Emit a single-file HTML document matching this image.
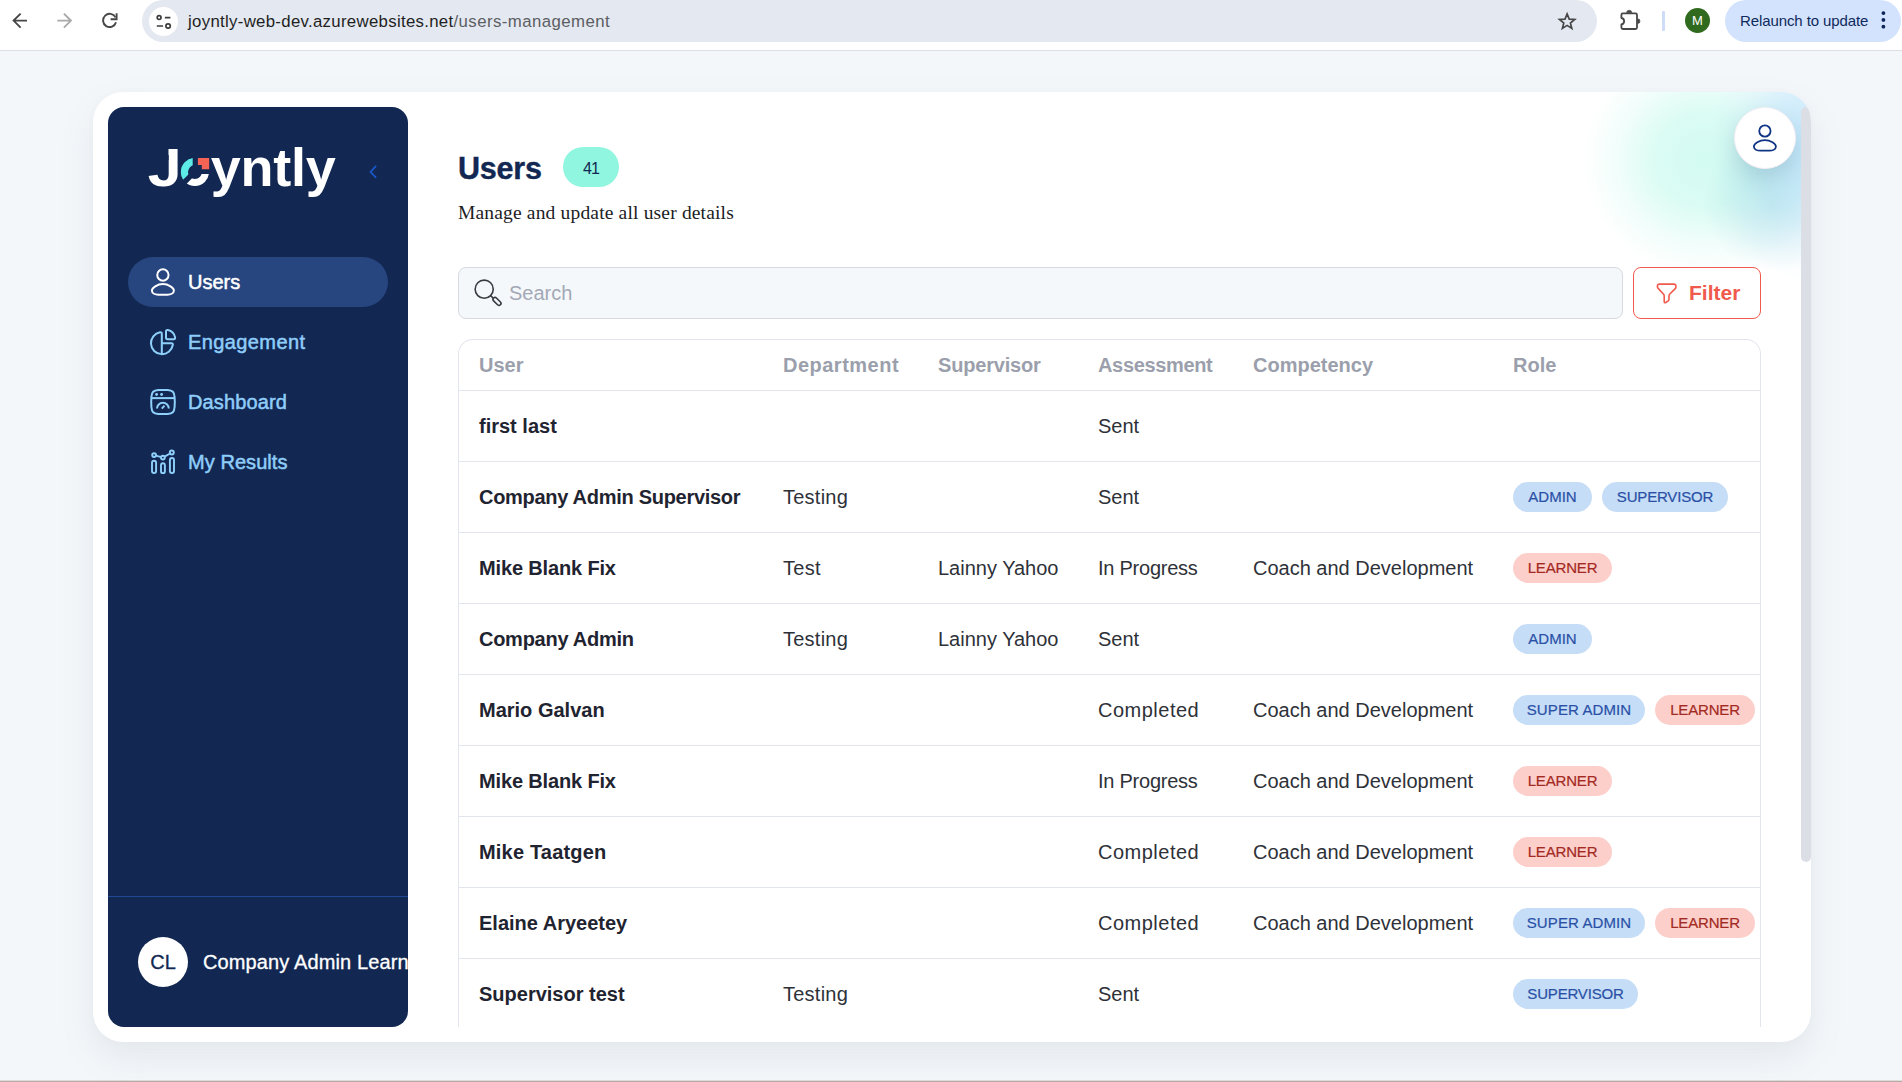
<!DOCTYPE html>
<html lang="en">
<head>
<meta charset="utf-8">
<title>Joyntly - Users</title>
<style>
*{box-sizing:border-box;margin:0;padding:0}
html,body{width:1902px;height:1082px;overflow:hidden}
body{position:relative;background:#f4f7fa;font-family:"Liberation Sans",sans-serif;color:#1f2430}
.abs{position:absolute}
/* ---------- browser chrome ---------- */
#chrome{position:absolute;left:0;top:0;width:1902px;height:51px;background:#fff;border-bottom:1px solid #dcdfe4}
#urlbar{position:absolute;left:142px;top:0;width:1455px;height:42px;border-radius:21px;background:#e4e8f0}
#tune{position:absolute;left:6.5px;top:6.5px;width:29px;height:29px;border-radius:50%;background:#fff}
#urltext{position:absolute;left:46px;top:1px;height:41px;line-height:41px;font-size:16.8px;color:#1f1f1f;white-space:nowrap;letter-spacing:0.31px}
#urltext span{color:#5b5e63;letter-spacing:0.43px}
#relaunch{position:absolute;left:1725px;top:0;width:176px;height:42px;border-radius:21px;background:#d3e3fd}
#relaunch .t{position:absolute;left:15px;top:0;line-height:42px;font-size:15px;letter-spacing:-.1px;color:#0f2a5c;white-space:nowrap}
#mavatar{position:absolute;left:1685px;top:8px;width:25px;height:25px;border-radius:50%;background:#2f6a1e;color:#fff;font-size:13px;line-height:25px;text-align:center}
#sep{position:absolute;left:1662px;top:11px;width:2.5px;height:19.5px;background:#cfdcf7;border-radius:1px}
/* ---------- app card ---------- */
#bottomline{position:absolute;left:0;top:1080px;width:1902px;height:2px;background:#b5aca5;border-top:1px solid #dedbd9}
#card{position:absolute;left:93px;top:92px;width:1718px;height:950px;border-radius:30px;background:#fff;box-shadow:0 16px 34px rgba(105,120,135,.115),0 0 6px rgba(105,120,135,.03);overflow:hidden}
#glow{position:absolute;left:1300px;top:0;width:417px;height:330px;background:radial-gradient(ellipse 95px 140px at 414px 50px,rgba(172,220,250,.7) 0%,rgba(172,220,250,.45) 35%,rgba(172,220,250,.15) 70%,rgba(168,218,250,0) 100%),radial-gradient(ellipse 70px 70px at 380px 110px,rgba(120,200,215,.35) 0%,rgba(120,200,215,.18) 50%,rgba(120,200,215,0) 100%),radial-gradient(ellipse 122px 116px at 312px 68px,rgba(150,245,222,.42) 0%,rgba(150,245,222,.35) 40%,rgba(150,245,222,.13) 72%,rgba(150,245,222,0) 100%)}
#sidebar{position:absolute;left:15px;top:15px;width:300px;height:920px;border-radius:16px;background:#122852;overflow:hidden;color:#fff}
.lo{color:transparent}
.lj{display:inline-block;transform:scaleX(1.13);transform-origin:8% 50%;clip-path:polygon(0 28px,18.4px 28px,18.4px 0,100% 0,100% 100%,0 100%)}
#logo{position:absolute;left:40px;top:25px;height:70px;line-height:70px;font-size:54px;font-weight:bold;letter-spacing:-0.2px;white-space:nowrap;color:#fff}
.nav{position:absolute;left:20px;width:260px;height:50px;border-radius:25px;color:#8fcdfa;font-size:20px;line-height:50px;-webkit-text-stroke:0.5px currentColor}
.nav.act{background:#27457f;color:#fff}
.nav .lbl{position:absolute;left:60px;top:0;white-space:nowrap}
#sdiv{position:absolute;left:0;top:789px;width:300px;height:1px;background:#1f4992}
#cl{position:absolute;left:30px;top:830px;width:50px;height:50px;border-radius:50%;background:#fff;color:#122852;font-size:20px;line-height:50px;text-align:center;-webkit-text-stroke:.3px #122852}
#cname{position:absolute;left:95px;top:830px;line-height:50px;font-size:20px;letter-spacing:.12px;-webkit-text-stroke:0.3px #fff;white-space:nowrap;color:#fff}
/* ---------- main ---------- */
#title{position:absolute;left:365px;top:53px;font-size:30.5px;font-weight:bold;letter-spacing:-.2px;color:#122852;line-height:46px;-webkit-text-stroke:.4px #122852}
#count{position:absolute;left:470px;top:55px;width:56px;height:40px;border-radius:20px;background:#90f6e0;color:#122852;font-size:16px;line-height:43px;text-align:center;letter-spacing:-1px}
#sub{position:absolute;left:365px;top:106px;font-family:"Liberation Serif",serif;font-size:19.5px;letter-spacing:.17px;line-height:30px;color:#1d1d1f;white-space:nowrap}
#search{position:absolute;left:365px;top:175px;width:1165px;height:52px;border-radius:8px;background:#f5f8fb;border:1px solid #d6d9e1}
#search .ph{position:absolute;left:50px;top:0;line-height:50px;font-size:20px;color:#a3a8b6}
#filter{position:absolute;left:1540px;top:175px;width:128px;height:52px;border-radius:8px;border:1px solid #f05a4c;color:#f05a4c;font-weight:bold;font-size:21px;background:rgba(255,255,255,.6)}
#filter .t{position:absolute;left:55px;top:0;line-height:50px}
#profile{position:absolute;left:1641px;top:15px;width:62px;height:62px;border-radius:50%;background:#fff;border:1px solid #f3eef3;box-shadow:0 10px 22px rgba(60,110,130,.22)}
#sbar{position:absolute;left:1708.3px;top:15px;width:9.7px;height:755px;border-radius:5px;background:#dcdee6}
/* table */
#tbl{position:absolute;left:365px;top:247px;width:1303px;height:688px;border:1px solid #e3e5ee;border-bottom:none;border-radius:15px 15px 0 0;overflow:hidden;background:#fff}
.row{position:absolute;left:0;width:1303px;height:71px;border-top:1px solid #e3e5ee;font-size:20px;line-height:71px;color:#2e3138}
.hd{position:absolute;left:0;top:0;width:1303px;height:51px;font-size:20px;font-weight:bold;color:#9b9fac;line-height:50px}
.c{position:absolute;top:0;white-space:nowrap}
.c1{left:20px}.c2{left:324px}.c3{left:479px}.c4{left:639px}.c5{left:794px}.c6{left:1054px}
.row .c1{font-weight:bold;color:#1f2430}
.tag{position:absolute;top:20px;height:30px;border-radius:15px;font-size:15px;line-height:30px;text-align:center;white-space:nowrap;-webkit-text-stroke:.2px currentColor}
.ls3{letter-spacing:-.18px}.ls1{letter-spacing:.1px}
.tb{background:#c5ddf6;color:#2a50a6}
.tr{background:#fdcfcb;color:#a32a22}
</style>
</head>
<body>
<div id="chrome">
  <div id="urlbar">
    <div id="tune"><svg class="abs" style="left:0;top:0" width="29" height="29" viewBox="148.5 6.5 29 29" fill="none" stroke="#3c3c3c" stroke-width="1.7"><circle cx="158.6" cy="17.1" r="1.9"/><path d="M164.4 17.1H169.9M156.3 25.5H162.6"/><circle cx="167.6" cy="25.5" r="2.2"/></svg></div>
    <div id="urltext">joyntly-web-dev.azurewebsites.net<span>/users-management</span></div>
  </div>
  
  <svg class="abs" style="left:0;top:0" width="140" height="50" viewBox="0 0 140 50" fill="none" stroke-linecap="butt" stroke-linejoin="miter">
    <path d="M27 20.6H14.2M20.6 13.6L13.6 20.6L20.6 27.6" stroke="#474747" stroke-width="1.9"/>
    <path d="M57.3 20.6H70.3M63.9 13.6L70.9 20.6L63.9 27.6" stroke="#a9a9a9" stroke-width="1.9"/>
    <path d="M115.5 17.4A6.6 6.6 0 1 0 116 22.2" stroke="#474747" stroke-width="1.9"/>
    <path d="M116.6 13.2V19.3H110.6" stroke="#474747" stroke-width="1.9"/>
  </svg>
  <svg class="abs" style="left:1550px;top:0" width="100" height="50" viewBox="1550 0 100 50" fill="none">
    <path d="M1567.1 13.9L1569.2 19.1L1574.7 19.4L1570.4 23.0L1571.8 28.4L1567.1 25.4L1562.4 28.4L1563.8 23.0L1559.5 19.4L1565.0 19.1Z" stroke="#474747" stroke-width="1.7" stroke-linejoin="miter"/>
    <path d="M1622.9 13.4H1635.5Q1637 13.4 1637 14.9V27.5Q1637 29 1635.5 29H1622.9Q1621.4 29 1621.4 27.5V24.5A3.3 3.3 0 0 0 1621.4 18V14.9Q1621.4 13.4 1622.9 13.4Z" stroke="#474747" stroke-width="1.8" stroke-linejoin="round"/><path d="M1626.6 12.8A2.6 2.6 0 0 1 1631.8 12.8ZM1637.6 18.8A2.4 2.4 0 0 1 1637.6 23.6Z" fill="#474747" stroke="#474747" stroke-width=".6"/>
  </svg>
  <div id="sep"></div>
  <div id="mavatar">M</div>
  <div id="relaunch"><div class="t">Relaunch to update</div><svg class="abs" style="left:152px;top:8px" width="14" height="26" viewBox="1878 9 14 26"><circle cx="1884.4" cy="14.1" r="1.9" fill="#0b2559"/><circle cx="1884.4" cy="20.9" r="1.9" fill="#0b2559"/><circle cx="1884.4" cy="27.7" r="1.9" fill="#0b2559"/></svg></div>
</div>
<div id="bottomline"></div>
<div id="card">
  <div id="glow"></div>
  <div id="sidebar">
    <div id="logo"><span class="lj">J</span><span class="lo">o</span>yntly</div><div class="nav act" style="top:150px"><span class="lbl">Users</span></div>
    <div class="nav" style="top:210px"><span class="lbl" style="letter-spacing:.4px">Engagement</span></div>
    <div class="nav" style="top:270px"><span class="lbl" style="letter-spacing:.13px">Dashboard</span></div>
    <div class="nav" style="top:330px"><span class="lbl" style="letter-spacing:.06px">My Results</span></div>
    <svg class="abs" style="left:70px;top:48px" width="34" height="34" viewBox="178 155 34 34"><defs><clipPath id="cpA"><polygon points="178,155 192.7,155 192.7,170.16 178,184.86"/></clipPath><clipPath id="cpB"><polygon points="196.3,174.1 212,174.1 212,189 181.4,189"/></clipPath></defs><circle cx="194.9" cy="172.05" r="10.5" fill="none" stroke="#5cebe6" stroke-width="7.1" clip-path="url(#cpA)"/><circle cx="194.9" cy="172.05" r="10.5" fill="none" stroke="#fff" stroke-width="7.1" clip-path="url(#cpB)"/><path d="M197.9 158H209.2V169.3H201.8V165H197.9Z" fill="#f46353"/></svg><svg class="abs" style="left:38px;top:158px" width="34" height="34" viewBox="146 265 34 34" fill="none" stroke="#fff" stroke-width="2" stroke-linecap="round" stroke-linejoin="round"><circle cx="162.9" cy="275" r="5.65"/><path d="M151.9 290.4C151.9 287.8 157.3 284.1 162.9 284.1C168.5 284.1 173.9 287.8 173.9 290.4C173.9 293.4 170.3 294.7 167.5 294.7H158.3C155.5 294.7 151.9 293.4 151.9 290.4Z"/></svg><svg class="abs" style="left:38px;top:218px" width="34" height="34" viewBox="146 325 34 34" fill="none" stroke="#8fd0fb" stroke-width="2" stroke-linecap="round" stroke-linejoin="round"><path d="M161.8 333.7Q161.8 332 160.1 332.3A11 11 0 1 0 172.8 345Q173.1 343.3 171.4 343.3H161.8M161.8 333.7V354.2"/><path d="M166 331.6Q166 329.8 167.8 330.1A9.6 9.6 0 0 1 175.1 337.4Q175.4 339.2 173.6 339.2H167.6Q166 339.2 166 337.6Z"/></svg><svg class="abs" style="left:38px;top:278px" width="34" height="34" viewBox="146 385 34 34" fill="none" stroke="#8fd0fb" stroke-width="2" stroke-linecap="round" stroke-linejoin="round"><path d="M158.3 390.1Q163 389.7 167.7 390.1C172.7 390.5 174.2 392 174.6 397Q175 402 174.6 407C174.2 412 172.7 413.5 167.7 413.9Q163 414.3 158.3 413.9C153.3 413.5 151.8 412 151.4 407Q151 402 151.4 397C151.8 392 153.3 390.5 158.3 390.1Z"/><path d="M151.6 398.1H174.4" stroke-linecap="butt"/><circle cx="156.6" cy="394.5" r="1.4" fill="#8fd0fb" stroke="none"/><circle cx="161.6" cy="394.5" r="1.4" fill="#8fd0fb" stroke="none"/><path d="M157 408.6A5.9 5.9 0 0 1 168.8 408.6" stroke-linecap="butt"/><path d="M161.8 408.6L164.5 405.6" stroke-linecap="butt"/></svg><svg class="abs" style="left:38px;top:338px" width="34" height="34" viewBox="146 445 34 34" fill="none" stroke="#8fd0fb" stroke-width="1.9" stroke-linecap="round" stroke-linejoin="round"><rect x="152" y="460.8" width="4.1" height="12.3" rx="2.05"/><rect x="161" y="463.3" width="3.9" height="9.8" rx="1.95"/><rect x="169.9" y="458" width="4.1" height="15.1" rx="2.05"/><circle cx="154.1" cy="455.1" r="1.9"/><circle cx="162.9" cy="457.6" r="1.9"/><circle cx="171.8" cy="452.5" r="2"/><path d="M156 455.7L161 457.1M164.6 456.6L170.1 453.5"/></svg><svg class="abs" style="left:256px;top:53px" width="18" height="24" viewBox="364 160 18 24" fill="none" stroke="#1b57c9" stroke-width="1.7" stroke-linecap="round" stroke-linejoin="round"><path d="M375.7 166.4L370.5 171.8L375.7 177.3"/></svg>
    <div id="sdiv"></div>
    <div id="cl">CL</div>
    <div id="cname">Company Admin Learner</div>
  </div>
  <div id="title">Users</div>
  <div id="count">41</div>
  <div id="sub">Manage and update all user details</div>
  <div id="search"><svg class="abs" style="left:11px;top:7px" width="36" height="36" viewBox="470 275 36 36" fill="none" stroke="#3a3b40" stroke-width="1.6" stroke-linecap="round" stroke-linejoin="round"><circle cx="484.2" cy="289.2" r="9.05"/><path d="M490.7 295.7L492.9 297.9"/><rect x="492.2" y="299.4" width="9.6" height="4" rx="2" transform="rotate(45 497 301.4)"/></svg><div class="ph">Search</div></div>
  <div id="filter"><svg class="abs" style="left:18px;top:10px" width="30" height="30" viewBox="1652 278 30 30" fill="none" stroke="#f05a4c" stroke-width="1.6" stroke-linecap="round" stroke-linejoin="round"><path d="M1659.6 284.1H1673.8Q1675.9 284.1 1675.9 286.2V286.9Q1675.9 287.9 1675.2 288.6L1669.6 294.2Q1669 294.8 1669 295.7V299.2Q1669 300.2 1668.2 300.8L1665.7 302.5Q1664.3 303.2 1664.2 301.6V295.9Q1664.2 294.9 1663.6 294.2L1658.2 288.4Q1657.4 287.6 1657.4 286.7V286.2Q1657.4 284.1 1659.6 284.1Z"/></svg><div class="t">Filter</div></div>
  <div id="profile"><svg class="abs" style="left:10px;top:10px" width="40" height="40" viewBox="1745 118 40 40" fill="none" stroke="#0f3484" stroke-width="1.8" stroke-linecap="round" stroke-linejoin="round"><circle cx="1764.9" cy="131" r="5.65"/><path d="M1753.9 146.4C1753.9 143.8 1759.3 140.1 1764.9 140.1C1770.5 140.1 1775.9 143.8 1775.9 146.4C1775.9 149.4 1772.3 150.7 1769.5 150.7H1760.3C1757.5 150.7 1753.9 149.4 1753.9 146.4Z"/></svg></div>
  <div id="sbar"></div>
  <div id="tbl">
    <div class="hd"><span class="c c1">User</span><span class="c c2" style="letter-spacing:0.49px">Department</span><span class="c c3" style="letter-spacing:-0.19px">Supervisor</span><span class="c c4" style="letter-spacing:-0.34px">Assessment</span><span class="c c5">Competency</span><span class="c c6">Role</span></div>
    <div class="row" style="top:50px"><span class="c c1">first last</span><span class="c c4">Sent</span></div>
    <div class="row" style="top:121px"><span class="c c1" style="letter-spacing:-0.29px">Company Admin Supervisor</span><span class="c c2" style="letter-spacing:0.25px">Testing</span><span class="c c4">Sent</span><span class="tag tb" style="left:1054px;width:79px">ADMIN</span><span class="tag tb ls3" style="left:1143px;width:126px">SUPERVISOR</span></div>
    <div class="row" style="top:192px"><span class="c c1" style="letter-spacing:-0.15px">Mike Blank Fix</span><span class="c c2" style="letter-spacing:0.3px">Test</span><span class="c c3">Lainny Yahoo</span><span class="c c4" style="letter-spacing:-0.24px">In Progress</span><span class="c c5">Coach and Development</span><span class="tag tr ls3" style="left:1054px;width:99px">LEARNER</span></div>
    <div class="row" style="top:263px"><span class="c c1" style="letter-spacing:-0.27px">Company Admin</span><span class="c c2" style="letter-spacing:0.25px">Testing</span><span class="c c3">Lainny Yahoo</span><span class="c c4">Sent</span><span class="tag tb" style="left:1054px;width:79px">ADMIN</span></div>
    <div class="row" style="top:334px"><span class="c c1">Mario Galvan</span><span class="c c4" style="letter-spacing:0.5px">Completed</span><span class="c c5">Coach and Development</span><span class="tag tb ls1" style="left:1054px;width:132px">SUPER ADMIN</span><span class="tag tr ls3" style="left:1196px;width:100px">LEARNER</span></div>
    <div class="row" style="top:405px"><span class="c c1" style="letter-spacing:-0.15px">Mike Blank Fix</span><span class="c c4" style="letter-spacing:-0.24px">In Progress</span><span class="c c5">Coach and Development</span><span class="tag tr ls3" style="left:1054px;width:99px">LEARNER</span></div>
    <div class="row" style="top:476px"><span class="c c1" style="letter-spacing:0.18px">Mike Taatgen</span><span class="c c4" style="letter-spacing:0.5px">Completed</span><span class="c c5">Coach and Development</span><span class="tag tr ls3" style="left:1054px;width:99px">LEARNER</span></div>
    <div class="row" style="top:547px"><span class="c c1">Elaine Aryeetey</span><span class="c c4" style="letter-spacing:0.5px">Completed</span><span class="c c5">Coach and Development</span><span class="tag tb ls1" style="left:1054px;width:132px">SUPER ADMIN</span><span class="tag tr ls3" style="left:1196px;width:100px">LEARNER</span></div>
    <div class="row" style="top:618px"><span class="c c1">Supervisor test</span><span class="c c2" style="letter-spacing:0.25px">Testing</span><span class="c c4">Sent</span><span class="tag tb ls3" style="left:1054px;width:125px">SUPERVISOR</span></div>
  </div>
</div>
</body>
</html>
